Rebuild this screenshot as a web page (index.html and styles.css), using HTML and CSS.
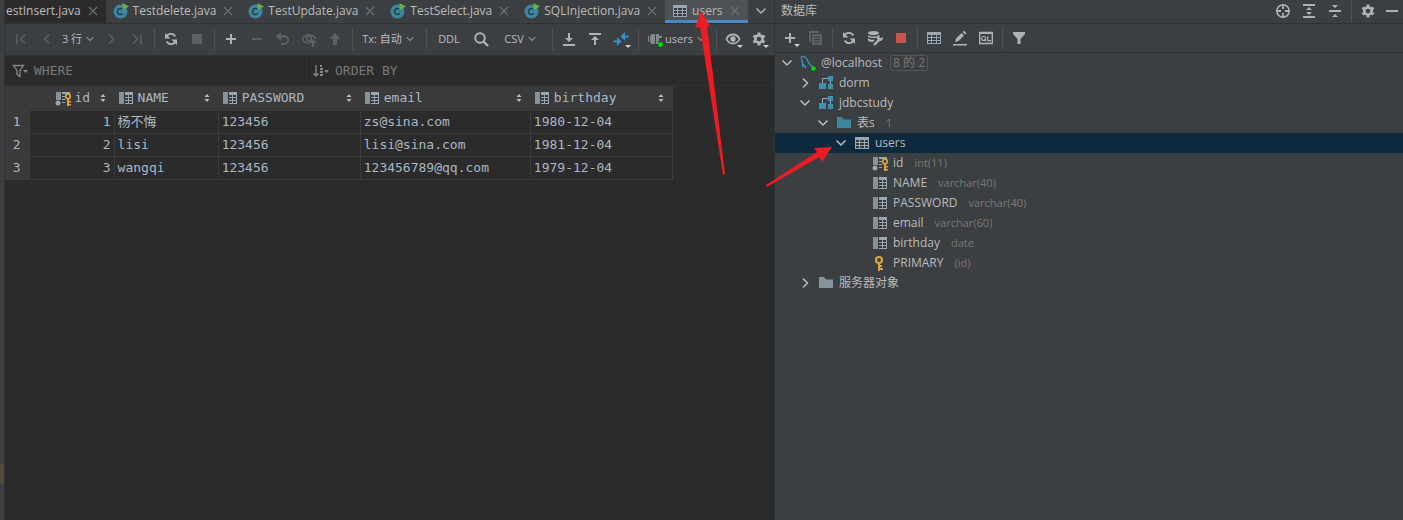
FILE: index.html
```
<!DOCTYPE html>
<html lang="zh-CN">
<head>
    <meta charset="UTF-8">
    <meta name="viewport" content="width=device-width, initial-scale=1.0">
    <title>users</title>
    <link rel="stylesheet" href="styles.css">
</head>
<body>
    <!-- Shared icons -->
    <svg class="sprite" aria-hidden="true">
        <symbol id="i-class" viewBox="0 0 16 16"><circle cx="7.5" cy="8.5" r="7" fill="#3e86a0"/><path d="M9.800 6.6A3 3 0 1 0 9.800 10.4" fill="none" stroke="#1f3c48" stroke-width="1.4"/><path d="M9.5 0v7l6.5-3.5z" fill="#62b543"/></symbol>
        <symbol id="i-close" viewBox="0 0 16 16"><path d="M4 4l8 8M12 4l-8 8" stroke="#6e7173" stroke-width="1.1"/></symbol>
        <symbol id="i-table" viewBox="0 0 16 16"><path d="M1 2h14v12H1z" fill="#9aa7b0"/><path d="M2 5h3v2H2zM6 5h4v2H6zM11 5h3v2h-3zM2 8h3v2H2zM6 8h4v2H6zM11 8h3v2h-3zM2 11h3v2H2zM6 11h4v2H6zM11 11h3v2h-3z" fill="#33393d"/></symbol>
        <symbol id="i-column" viewBox="0 0 16 16"><path d="M1 2h5v12H1z" fill="#87939a"/><path d="M7 2h8v12H7z" fill="#9aa7b0"/><path d="M7 5h3v2H7zM11 5h3v2h-3zM7 8h3v2H7zM11 8h3v2h-3zM7 11h3v2H7zM11 11h3v2h-3z" fill="#33393d"/></symbol>
        <symbol id="i-keycol" viewBox="0 0 16 16"><path d="M1 2h5v8H1z" fill="#87939a"/><path d="M7 2h8v2H7zM7 6h3v1H7zM7 9h3v1H7zM7 12h3v1H7z" fill="#9aa7b0"/><circle cx="3" cy="13" r="2.5" fill="#9aa7b0"/><circle cx="13" cy="6.5" r="2.3" fill="none" stroke="#d9a343" stroke-width="1.7"/><path d="M12 8.5h2V16h-2zM14 11h2v1.500h-2zM14 14h2v1.500h-2z" fill="#d9a343"/></symbol>
        <symbol id="i-key" viewBox="0 0 16 16"><circle cx="7" cy="5" r="3" fill="none" stroke="#d9a343" stroke-width="2.200"/><path d="M6 8h2v8H6zM8 10h2v2H8zM8 13h3v2H8z" fill="#d9a343"/></symbol>
        <symbol id="i-schema" viewBox="0 0 16 16"><path d="M1 8h7v6H1zM10 9h5v5h-5zM10 1h5v5h-5z" fill="#3e8fb0"/><path d="M4.500 8V3.500H10M12.500 6v3" fill="none" stroke="#9aa7b0"/></symbol>
        <symbol id="i-folder" viewBox="0 0 16 16"><path d="M1 2h5l2 2.500h7V13H1z" fill="currentColor"/></symbol>
        <symbol id="i-down" viewBox="0 0 16 16"><path d="M3.500 5.500L8 10l4.500-4.500" fill="none" stroke="currentColor" stroke-width="1.500"/></symbol>
        <symbol id="i-right" viewBox="0 0 16 16"><path d="M6 3.500L10.500 8 6 12.500" fill="none" stroke="currentColor" stroke-width="1.500"/></symbol>
        <symbol id="i-left" viewBox="0 0 16 16"><path d="M10 3.500L5.500 8l4.500 4.500" fill="none" stroke="currentColor" stroke-width="1.500"/></symbol>
        <symbol id="i-first" viewBox="0 0 16 16"><path d="M12 3.500L7.500 8l4.500 4.500M4 3v10" fill="none" stroke="currentColor" stroke-width="1.500"/></symbol>
        <symbol id="i-last" viewBox="0 0 16 16"><path d="M4 3.500L8.500 8 4 12.500M12 3v10" fill="none" stroke="currentColor" stroke-width="1.500"/></symbol>
        <symbol id="i-refresh" viewBox="0 0 16 16"><path d="M3 7a5 5 0 0 1 9.300-1.500M13 9a5 5 0 0 1-9.300 1.500" fill="none" stroke="currentColor" stroke-width="1.800"/><path d="M2 2v5.500h5.500zM14 14V8.500H8.500z" fill="currentColor"/></symbol>
        <symbol id="i-stop" viewBox="0 0 16 16"><path d="M3 3h10v10H3z" fill="currentColor"/></symbol>
        <symbol id="i-plus" viewBox="0 0 16 16"><path d="M8 3v10M3 8h10" stroke="currentColor" stroke-width="2"/></symbol>
        <symbol id="i-minus" viewBox="0 0 16 16"><path d="M3 8h10" stroke="currentColor" stroke-width="1.800"/></symbol>
        <symbol id="i-hide" viewBox="0 0 16 16"><path d="M2 7h12v2H2z" fill="currentColor"/></symbol>
        <symbol id="i-undo" viewBox="0 0 16 16"><path d="M3 5.500h6.500a3.700 3.700 0 0 1 0 7.500H6" fill="none" stroke="currentColor" stroke-width="1.900"/><path d="M1 5.500L6 1v9z" fill="currentColor"/></symbol>
        <symbol id="i-eye" viewBox="0 0 16 16"><path d="M1.500 8C4 2 12 2 14.500 8 12 14 4 14 1.500 8z" fill="none" stroke="currentColor" stroke-width="1.800"/><circle cx="8" cy="8" r="2.700" fill="currentColor"/></symbol>
        <symbol id="i-eyeup" viewBox="0 0 16 16"><path d="M8 12C5 12 2.500 10.500 1.500 8 4 2.500 12 2.500 14.500 8" fill="none" stroke="currentColor" stroke-width="1.700"/><circle cx="8" cy="7.500" r="2.300" fill="none" stroke="currentColor" stroke-width="1.500"/><path d="M12 8l4 4h-3v4h-2v-4H8z" fill="currentColor"/></symbol>
        <symbol id="i-up" viewBox="0 0 16 16"><path d="M8 2l5.500 6H10v6H6V8H2.500z" fill="currentColor"/></symbol>
        <symbol id="i-search" viewBox="0 0 16 16"><circle cx="7" cy="7" r="4.800" fill="none" stroke="currentColor" stroke-width="2"/><path d="M10.500 10.500L15 15" stroke="currentColor" stroke-width="2.400"/></symbol>
        <symbol id="i-import" viewBox="0 0 16 16"><path d="M2 13h12v2H2zM7 2h2v5h3l-4 4-4-4h3z" fill="currentColor"/></symbol>
        <symbol id="i-export" viewBox="0 0 16 16"><path d="M2 2h12v2H2zM7 14h2V9h3L8 5 4 9h3z" fill="currentColor"/></symbol>
        <symbol id="i-compare" viewBox="0 0 16 16"><path d="M7.500 5.500L12 1v3.500h3.500v2H12V10zM8.500 10.500L4 15v-3.500H.5v-2H4V6z" fill="#3592c4"/></symbol>
        <symbol id="i-plug" viewBox="0 0 16 16"><path d="M1 5h1v6H1zM8 3v10H6a3 3 0 0 1-3-3V6a3 3 0 0 1 3-3zM9 3h3v2h3v2h-3v3h-1v3H9z" fill="#7f8b91"/><circle cx="13.500" cy="13.500" r="2.400" fill="#00e100"/></symbol>
        <symbol id="i-gear" viewBox="0 0 16 16"><path d="M8 1.500v13M2.400 4.700l11.200 6.600M2.400 11.300l11.200-6.600" stroke="currentColor" stroke-width="3"/><circle cx="8" cy="8" r="3.600" fill="none" stroke="currentColor" stroke-width="2.600"/><circle cx="8" cy="8" r="2.300" fill="#3c3f41"/></symbol>
        <symbol id="i-copy" viewBox="0 0 16 16"><path d="M1 1h10v2H3v9H1z" fill="currentColor"/><path d="M4 4h10v11H4z" fill="currentColor"/><path d="M6 7h6M6 9.500h6M6 12h6" stroke="#3c3f41"/></symbol>
        <symbol id="i-dbwrench" viewBox="0 0 16 16"><ellipse cx="6.500" cy="3" rx="5.500" ry="2" fill="currentColor"/><path d="M1 5c2 2 9 2 11 0v1.500c-2 2-9 2-11 0zM1 8c2 2 5 2 7 1.500L6 12c-2 0-4-.5-5-1.500z" fill="currentColor"/><path d="M7 15l5-5" stroke="currentColor" stroke-width="2.400"/><path d="M15.500 6.500a3 3 0 1 1-3-1.500v3h2z" fill="currentColor"/></symbol>
        <symbol id="i-edit" viewBox="0 0 16 16"><path d="M1 14h14v1.500H1zM3 12l1-3.500 5.500-5.500 2.500 2.500L6.500 11zM10.500 2L12 .8l2.500 2.500L13 4.500z" fill="currentColor"/></symbol>
        <symbol id="i-ql" viewBox="0 0 16 16"><path d="M1.700 2.500h12.600v11H1.700z" fill="none" stroke="currentColor" stroke-width="1.400"/><path d="M1 2h14v2H1z" fill="currentColor"/><circle cx="5.700" cy="8.500" r="2" fill="none" stroke="currentColor" stroke-width="1.100"/><path d="M6 9.500l2 1.500M9.700 6v4.600H13" fill="none" stroke="currentColor" stroke-width="1.200"/></symbol>
        <symbol id="i-filter" viewBox="0 0 16 16"><path d="M2 2h12v2L9.500 9v5h-3V9L2 4z" fill="currentColor"/></symbol>
        <symbol id="i-funnel" viewBox="0 0 16 16"><path d="M1.500 2.500h10l-3.500 5v6L5 11.500v-4z" fill="none" stroke="#868a8c" stroke-width="1.300"/><path d="M11 7h5l-2.500 3z" fill="#868a8c"/></symbol>
        <symbol id="i-order" viewBox="0 0 16 16"><path d="M3 2v11M.5 10.500L3 13l2.500-2.500" fill="none" stroke="#868a8c" stroke-width="1.300"/><path d="M7 2h2v2H7zM7 5h3v2H7zM7 8h3v2H7zM7 11h3v2H7zM11 7h5l-2.500 3z" fill="#868a8c"/></symbol>
        <symbol id="i-sort" viewBox="0 0 8 16"><path d="M1.500 7L4 4l2.500 3zM1.500 9L4 12l2.500-3z" fill="#bbb"/></symbol>
        <symbol id="i-target" viewBox="0 0 16 16"><circle cx="8" cy="8" r="6.200" fill="none" stroke="currentColor" stroke-width="1.500"/><path d="M8 1v5M8 10v5M1 8h5M10 8h5" stroke="currentColor" stroke-width="1.800"/></symbol>
        <symbol id="i-expand" viewBox="0 0 16 16"><path d="M2 1h12v2H2zM2 13h12v2H2zM5 7l3-3 3 3zM5 9l3 3 3-3z" fill="currentColor"/></symbol>
        <symbol id="i-collapse" viewBox="0 0 16 16"><path d="M2 7h12v2H2zM5 2l3 3 3-3zM5 14l3-3 3 3z" fill="currentColor"/></symbol>
        <symbol id="i-mysql" viewBox="0 0 16 16"><path d="M2.500 12C4 8 0 3 1.500 1.500 5 1 7 3.500 8 6.500c1 3 2.500 3.500 5 5.500M3 9l3 4" fill="none" stroke="#3592c4" stroke-width="1.300"/><circle cx="13.500" cy="13.500" r="2.300" fill="#00e100"/></symbol>
    </svg>

    <div class="ide">
        <div class="stripe"><span class="mark"></span></div>

        <main class="editor">
            <nav class="tabs">
                <a class="tab dark" href="#">estInsert.java<svg class="icon"><use href="#i-close"/></svg></a>
                <a class="tab" href="#"><svg class="icon"><use href="#i-class"/></svg>Testdelete.java<svg class="icon"><use href="#i-close"/></svg></a>
                <a class="tab" href="#"><svg class="icon"><use href="#i-class"/></svg>TestUpdate.java<svg class="icon"><use href="#i-close"/></svg></a>
                <a class="tab" href="#"><svg class="icon"><use href="#i-class"/></svg>TestSelect.java<svg class="icon"><use href="#i-close"/></svg></a>
                <a class="tab" href="#"><svg class="icon"><use href="#i-class"/></svg>SQLInjection.java<svg class="icon"><use href="#i-close"/></svg></a>
                <a class="tab active" href="#"><svg class="icon"><use href="#i-table"/></svg>users<svg class="icon"><use href="#i-close"/></svg></a>
                <button class="btn" aria-label="More tabs"><svg class="icon"><use href="#i-down"/></svg></button>
            </nav>

            <div class="toolbar">
                <button class="btn off" aria-label="First page"><svg class="icon"><use href="#i-first"/></svg></button>
                <button class="btn off" aria-label="Previous page"><svg class="icon"><use href="#i-left"/></svg></button>
                <button class="btn text">3 行<svg class="chev"><use href="#i-down"/></svg></button>
                <button class="btn off" aria-label="Next page"><svg class="icon"><use href="#i-right"/></svg></button>
                <button class="btn off" aria-label="Last page"><svg class="icon"><use href="#i-last"/></svg></button>
                <span class="sep"></span>
                <button class="btn" aria-label="Reload"><svg class="icon"><use href="#i-refresh"/></svg></button>
                <button class="btn off" aria-label="Stop"><svg class="icon"><use href="#i-stop"/></svg></button>
                <span class="sep"></span>
                <button class="btn" aria-label="Add row"><svg class="icon"><use href="#i-plus"/></svg></button>
                <button class="btn off" aria-label="Delete row"><svg class="icon"><use href="#i-minus"/></svg></button>
                <button class="btn off" aria-label="Revert"><svg class="icon"><use href="#i-undo"/></svg></button>
                <button class="btn off" aria-label="Preview changes"><svg class="icon"><use href="#i-eyeup"/></svg></button>
                <button class="btn off" aria-label="Submit"><svg class="icon"><use href="#i-up"/></svg></button>
                <span class="sep"></span>
                <button class="btn text wide">Tx: 自动<svg class="chev"><use href="#i-down"/></svg></button>
                <span class="sep"></span>
                <button class="btn text">DDL</button>
                <button class="btn" aria-label="Find"><svg class="icon"><use href="#i-search"/></svg></button>
                <button class="btn text mid">CSV<svg class="chev"><use href="#i-down"/></svg></button>
                <span class="sep"></span>
                <button class="btn" aria-label="Export"><svg class="icon"><use href="#i-import"/></svg></button>
                <button class="btn" aria-label="Import"><svg class="icon"><use href="#i-export"/></svg></button>
                <button class="btn more" aria-label="Compare"><svg class="icon"><use href="#i-compare"/></svg></button>
                <span class="sep"></span>
                <button class="btn text session"><svg class="icon"><use href="#i-plug"/></svg>users<svg class="chev"><use href="#i-down"/></svg></button>
                <span class="sep"></span>
                <button class="btn more" aria-label="View"><svg class="icon"><use href="#i-eye"/></svg></button>
                <button class="btn more" aria-label="Settings"><svg class="icon"><use href="#i-gear"/></svg></button>
            </div>

            <div class="filters">
                <label class="filter"><svg class="icon"><use href="#i-funnel"/></svg><input type="text" placeholder="WHERE" aria-label="WHERE"></label>
                <label class="filter"><svg class="icon"><use href="#i-order"/></svg><input type="text" placeholder="ORDER BY" aria-label="ORDER BY"></label>
            </div>

            <table class="grid">
                <colgroup><col class="c-num"><col class="c-id"><col class="c-name"><col class="c-pass"><col class="c-email"><col class="c-pass"></colgroup>
                <thead>
                    <tr>
                        <th></th>
                        <th><div class="head end"><svg class="icon"><use href="#i-keycol"/></svg>id<svg class="sort"><use href="#i-sort"/></svg></div></th>
                        <th><div class="head"><svg class="icon"><use href="#i-column"/></svg>NAME<svg class="sort"><use href="#i-sort"/></svg></div></th>
                        <th><div class="head"><svg class="icon"><use href="#i-column"/></svg>PASSWORD<svg class="sort"><use href="#i-sort"/></svg></div></th>
                        <th><div class="head"><svg class="icon"><use href="#i-column"/></svg>email<svg class="sort"><use href="#i-sort"/></svg></div></th>
                        <th><div class="head"><svg class="icon"><use href="#i-column"/></svg>birthday<svg class="sort"><use href="#i-sort"/></svg></div></th>
                    </tr>
                </thead>
                <tbody>
                    <tr><th>1</th><td class="num">1</td><td>杨不悔</td><td>123456</td><td>zs@sina.com</td><td>1980-12-04</td></tr>
                    <tr><th>2</th><td class="num">2</td><td>lisi</td><td>123456</td><td>lisi@sina.com</td><td>1981-12-04</td></tr>
                    <tr><th>3</th><td class="num">3</td><td>wangqi</td><td>123456</td><td>123456789@qq.com</td><td>1979-12-04</td></tr>
                </tbody>
            </table>
        </main>

        <aside class="database">
            <header class="title">
                <span class="name">数据库</span>
                <button class="btn" aria-label="Select in tree"><svg class="icon"><use href="#i-target"/></svg></button>
                <button class="btn" aria-label="Expand all"><svg class="icon"><use href="#i-expand"/></svg></button>
                <button class="btn" aria-label="Collapse all"><svg class="icon"><use href="#i-collapse"/></svg></button>
                <span class="sep"></span>
                <button class="btn" aria-label="Options"><svg class="icon"><use href="#i-gear"/></svg></button>
                <button class="btn slim" aria-label="Hide"><svg class="icon"><use href="#i-hide"/></svg></button>
            </header>
            <div class="toolbar">
                <button class="btn more" aria-label="New"><svg class="icon"><use href="#i-plus"/></svg></button>
                <button class="btn off" aria-label="Duplicate"><svg class="icon"><use href="#i-copy"/></svg></button>
                <span class="sep"></span>
                <button class="btn" aria-label="Refresh"><svg class="icon"><use href="#i-refresh"/></svg></button>
                <button class="btn" aria-label="Data source properties"><svg class="icon"><use href="#i-dbwrench"/></svg></button>
                <button class="btn red" aria-label="Disconnect"><svg class="icon"><use href="#i-stop"/></svg></button>
                <span class="sep"></span>
                <button class="btn" aria-label="Open table"><svg class="icon"><use href="#i-table"/></svg></button>
                <button class="btn" aria-label="Edit"><svg class="icon"><use href="#i-edit"/></svg></button>
                <button class="btn" aria-label="Query console"><svg class="icon"><use href="#i-ql"/></svg></button>
                <span class="sep"></span>
                <button class="btn" aria-label="Filter"><svg class="icon"><use href="#i-filter"/></svg></button>
            </div>
            <ul class="tree">
                <li class="row"><svg class="icon"><use href="#i-down"/></svg><svg class="icon"><use href="#i-mysql"/></svg>@localhost<span class="count">8 的 2</span></li>
                <li class="row l1"><svg class="icon"><use href="#i-right"/></svg><svg class="icon"><use href="#i-schema"/></svg>dorm</li>
                <li class="row l1"><svg class="icon"><use href="#i-down"/></svg><svg class="icon"><use href="#i-schema"/></svg>jdbcstudy</li>
                <li class="row l2"><svg class="icon"><use href="#i-down"/></svg><svg class="icon blue"><use href="#i-folder"/></svg>表s<span class="hint">1</span></li>
                <li class="row l3 selected"><svg class="icon"><use href="#i-down"/></svg><svg class="icon"><use href="#i-table"/></svg>users</li>
                <li class="row l4"><svg class="icon"><use href="#i-keycol"/></svg>id<span class="hint">int(11)</span></li>
                <li class="row l4"><svg class="icon"><use href="#i-column"/></svg>NAME<span class="hint">varchar(40)</span></li>
                <li class="row l4"><svg class="icon"><use href="#i-column"/></svg>PASSWORD<span class="hint">varchar(40)</span></li>
                <li class="row l4"><svg class="icon"><use href="#i-column"/></svg>email<span class="hint">varchar(60)</span></li>
                <li class="row l4"><svg class="icon"><use href="#i-column"/></svg>birthday<span class="hint">date</span></li>
                <li class="row l4"><svg class="icon"><use href="#i-key"/></svg>PRIMARY<span class="hint">(id)</span></li>
                <li class="row l1"><svg class="icon"><use href="#i-right"/></svg><svg class="icon gray"><use href="#i-folder"/></svg>服务器对象</li>
            </ul>
        </aside>
    </div>

    <!-- Red pointers drawn over the window -->
    <svg class="arrows" viewBox="0 0 1403 520" aria-hidden="true">
        <path d="M701 11L710 26 707 26 725 174 723 175 700 27 695 28z"/>
        <path d="M832 147L822 162 819 157 767 187 766 185 817 152 814 148z"/>
    </svg>
</body>
</html>
```

FILE: styles.css
```
* { box-sizing: border-box; }
body { margin: 0; background: #2b2b2b; color: #bbbbbb; font: 12px/16px "Open Sans", "Noto Sans CJK SC", sans-serif; }
button { font: inherit; color: inherit; background: none; border: 0; padding: 0; }
a { color: inherit; text-decoration: none; }

.sprite { display: none; }
.icon { width: 16px; height: 16px; flex: none; }
.chev { width: 12px; height: 12px; flex: none; color: #8a9194; }

.ide { display: grid; grid-template-columns: 5px minmax(0, 769fr) minmax(0, 629fr); min-height: 100vh; }
.stripe { background: #3c3f41; border-right: 1px solid #323232; display: flex; align-items: flex-end; }
.mark { width: 4px; height: 20px; margin-bottom: 36px; background: #524b3c; }

/* Editor tabs */
.editor { min-width: 0; }
.tabs { display: flex; height: 24px; background: #3c3f41; border-bottom: 1px solid #2f3133; overflow: hidden; }
.tab { display: flex; align-items: center; gap: 4px; padding: 0 5px 2px 7px; white-space: nowrap; }
.tab.dark { background: #2b2b2b; padding-left: 1px; }
.tab.active { background: #4e5254; box-shadow: inset 0 -3px #4a88c7; }

/* Toolbars */
.toolbar { display: flex; align-items: center; height: 32px; padding: 0 0 1px 3px; background: #3c3f41; border-bottom: 1px solid #323232; }
.btn { display: flex; align-items: center; justify-content: center; width: 26px; height: 22px; flex: none; color: #afb1b3; }
.btn.text { width: auto; min-width: 38px; color: #bbbbbb; font-size: 11px; white-space: nowrap; gap: 2px; }
.btn.mid { min-width: 54px; }
.btn.wide { min-width: 66px; }
.btn.session { min-width: 70px; }
.btn.off { color: #5e6163; }
.btn.red { color: #c75450; }
.btn.slim { width: 22px; }
.btn.more { position: relative; }
.btn.more::after { content: ""; position: absolute; right: 3px; bottom: 2px; border: 3px solid transparent; border-top-color: #ced0d6; border-bottom: 0; }
.sep { width: 8px; height: 22px; flex: none; background: linear-gradient(#515151, #515151) center / 1px 100% no-repeat; }

/* WHERE / ORDER BY */
.filters { display: grid; grid-template-columns: 301px 1fr; height: 30px; border-bottom: 1px solid #323232; }
.filter { display: flex; align-items: center; gap: 6px; padding-left: 7px; }
.filter + .filter { border-left: 1px solid #323232; padding-left: 6px; }
.filter input { flex: 1; min-width: 0; background: none; border: 0; padding: 0; color: #a9b7c6; font: 13px/16px "DejaVu Sans Mono", monospace; }
.filter input::placeholder { color: #787878; opacity: 1; }

/* Result grid */
.grid { table-layout: fixed; width: 668px; border-collapse: collapse; color: #a9b7c6; font: 13px/16px "DejaVu Sans Mono", "Noto Sans CJK SC", monospace; }
.grid th, .grid td { height: 23px; padding: 1px 3px 0; border: 1px solid #393b3c; text-align: left; font-weight: normal; white-space: nowrap; }
.grid th { background: #3a3a3a; }
.grid tbody th { text-align: center; }
.grid thead th { height: 24px; border-top: 0; }
.grid td.num { text-align: right; }
.grid tr > :first-child { border-left: 0; }
.head { display: flex; align-items: center; gap: 4px; }
.head.end { padding-left: 22px; }
.sort { width: 8px; height: 16px; margin-left: auto; margin-right: 4px; }
.c-num { width: 24px; }
.c-id { width: 85px; }
.c-name { width: 104px; }
.c-pass { width: 142px; }
.c-email { width: 170px; }

/* Database panel */
.database { background: #3c3f41; border-left: 1px solid #2f3133; font-size: 12px; }
.title { display: flex; align-items: center; height: 24px; border-bottom: 1px solid #2f3133; padding: 0 0 2px 6px; }
.title .name { margin-right: auto; }
.database .toolbar { height: 29px; padding: 0 0 0 2px; }
.database .sep { width: 7px; }
.tree { list-style: none; margin: 0; padding: 0; }
.row { display: flex; align-items: center; gap: 5px; height: 20px; padding-left: 4px; white-space: nowrap; }
.row.l1 { padding-left: 22px; }
.row.l2 { padding-left: 40px; }
.row.l3 { padding-left: 58px; }
.row.l4 { padding-left: 97px; }
.row.selected { background: #0d293e; }
.hint { color: #787878; margin-left: 6px; font-size: 11px; }
.count { color: #787878; border: 1px solid #55585a; border-radius: 3px; padding: 0 2px; line-height: 14px; margin-left: 3px; }
.blue { color: #3e86a0; }
.gray { color: #87939a; }

.arrows { position: absolute; top: 0; left: 0; width: 1403px; height: 520px; max-width: 100%; fill: #ed1c24; pointer-events: none; }
```
